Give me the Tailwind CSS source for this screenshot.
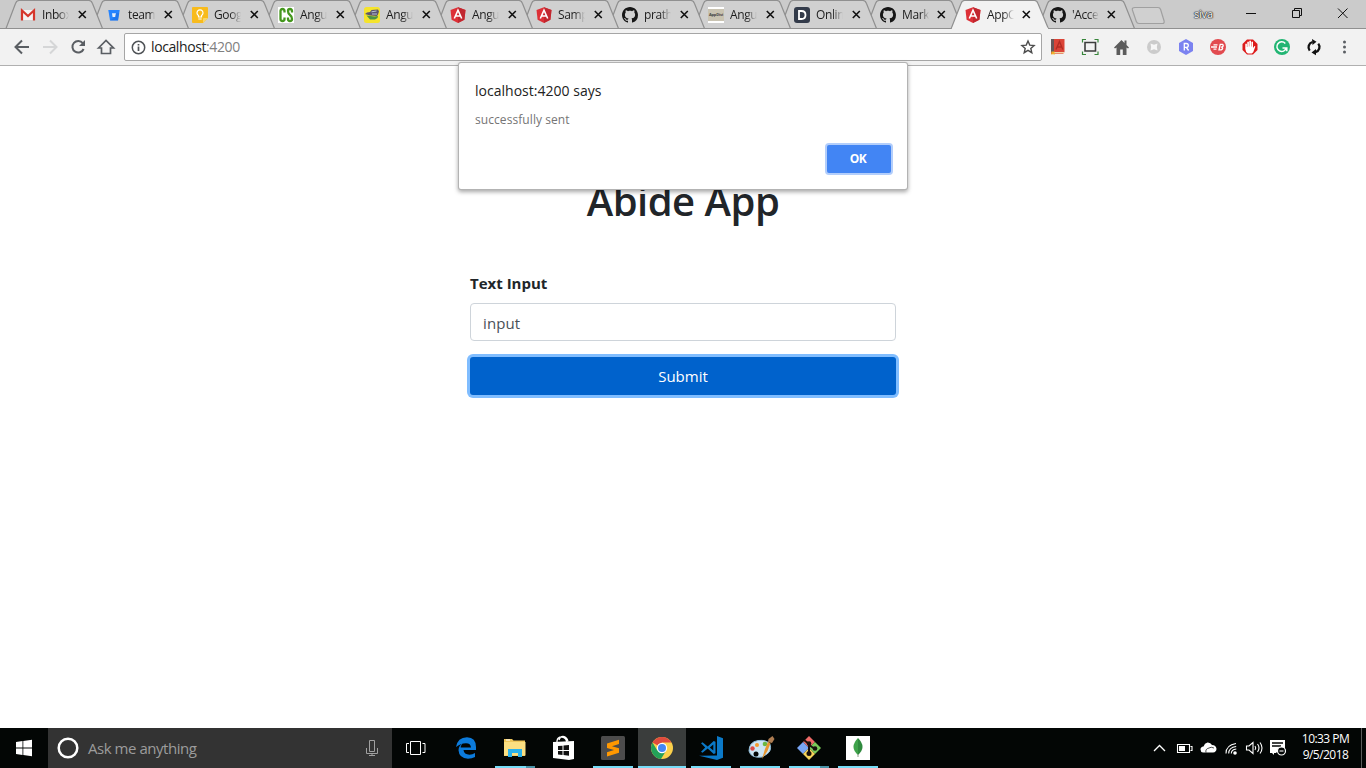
<!DOCTYPE html>
<html lang="en">
<head>
<meta charset="utf-8">
<title>AppComponent</title>
<script src="https://cdn.jsdelivr.net/npm/@tailwindcss/browser@4"></script>
</head>
<body class="w-[1366px] h-[768px] overflow-hidden bg-white font-['Open_Sans','Noto_Sans',sans-serif] text-[#212529]">
<svg class="hidden">
  <defs>
    <path id="tab" d="M6 28.5 L15.5 3.5 Q16.500 .5 19 .5 H89 Q91.500 .5 92.500 3.500 L102.500 28.500" />
    <symbol id="x" viewBox="0 0 9 9"><path d="M.8 1l7 7M7.800 1L.8 8" stroke="#111" stroke-width="1.6" fill="none"/></symbol>
    <symbol id="ng" viewBox="0 0 16 16"><path d="M8 .3L15.500 3l-1.100 9.700L8 16 1.600 12.700.5 3z" fill="#dd3037"/><path d="M8 .3L15.500 3l-1.100 9.700L8 16z" fill="#c1272f"/><path d="M4.300 11.500L8 3.200l3.700 8.300M5.800 9h4.400" stroke="#fff" stroke-width="1.600" fill="none"/></symbol>
    <symbol id="gh" viewBox="0 0 16 16"><path fill="#161616" d="M8 0C3.580 0 0 3.580 0 8c0 3.540 2.290 6.530 5.470 7.590.4.070.55-.17.55-.38 0-.19-.010-.820-.010-1.490-2.010.37-2.530-.49-2.690-.94-.090-.23-.48-.94-.820-1.130-.28-.15-.68-.52-.010-.53.63-.010 1.080.58 1.230.82.72 1.210 1.870.87 2.330.66.070-.52.28-.87.51-1.070-1.780-.2-3.640-.89-3.640-3.950 0-.87.31-1.590.82-2.150-.080-.2-.36-1.020.080-2.120 0 0 .67-.21 2.200.82.64-.18 1.320-.27 2-.27s1.360.090 2 .27c1.530-1.040 2.200-.82 2.200-.82.44 1.100.16 1.920.080 2.120.51.56.82 1.270.82 2.150 0 3.070-1.870 3.750-3.650 3.950.29.25.54.73.54 1.480 0 1.070-.010 1.930-.010 2.200 0 .21.15.46.55.38A8.010 8.010 0 0 0 16 8c0-4.420-3.580-8-8-8z"/></symbol>
  </defs>
</svg>

<div class="relative flex h-screen flex-col">
  <!-- Tab strip -->
  <header class="relative h-[29px] shrink-0 bg-[#cbcbcb]">
    <svg class="absolute inset-0" width="1366" height="29" fill="#d0d0d0" stroke="#909090" stroke-width="1.200">
      <use href="#tab" x="1032"/><use href="#tab" x="860"/><use href="#tab" x="774"/><use href="#tab" x="688"/><use href="#tab" x="602"/><use href="#tab" x="516"/><use href="#tab" x="430"/><use href="#tab" x="344"/><use href="#tab" x="258"/><use href="#tab" x="172"/><use href="#tab" x="86"/><use href="#tab" x="0"/>
      <path d="M0 28.500H1366"/>
      <path d="M1135 7.500h23q2 0 2.600 2l3.500 11.500q.5 2.500-1.600 2.500h-23.500q-2 0-2.700-2l-3.900-11.500q-.8-2.500 2.600-2.500z" stroke="#a0a0a0"/>
      <path d="M951 29 L961 3.500 Q962 .5 964.500 .5 H1034.500 Q1037 .5 1038 3.500 L1048.500 29" fill="#f2f2f2"/>
      <path d="M952 28.500H1048" stroke="#f2f2f2" stroke-width="1.500"/>
    </svg>
    <div class="relative flex h-full">
      <nav class="flex h-full w-[1124px] pl-[20px] text-[12px] leading-[29px] tracking-[-0.4px] text-[#1d1d1d]">
        <div class="flex w-[86px] shrink-0 items-center"><svg class="size-4 shrink-0" viewBox="0 0 16 16"><path d="M2 3h12v10H2z" fill="#f5f2f2"/><path d="M2 13.500V3.500L8 9l6-5.500v10" fill="none" stroke="#d6362b" stroke-width="2.200"/></svg><span class="ml-[6px] w-[27px] whitespace-nowrap [mask-image:linear-gradient(to_right,black_60%,transparent)]">Inbox</span><svg class="ml-[9px] size-[9px]"><use href="#x"/></svg></div>
        <div class="flex w-[86px] shrink-0 items-center"><svg class="size-4 shrink-0" viewBox="0 0 16 16"><path d="M2.300 3h11.400l-1.700 10.500H4z" fill="#2684ff"/><path d="M6 6.300h4l-.6 3.700H6.600z" fill="#e3eefc"/><path d="M10 6.300h3.200L12 13.500H4l5-3.500z" fill="#1769de" opacity=".5"/></svg><span class="ml-[6px] w-[27px] whitespace-nowrap [mask-image:linear-gradient(to_right,black_80%,transparent)]">team</span><svg class="ml-[9px] size-[9px]"><use href="#x"/></svg></div>
        <div class="flex w-[86px] shrink-0 items-center"><svg class="size-4 shrink-0" viewBox="0 0 16 16"><path d="M1 0h14q1 0 1 1v10l-5 5H1q-1 0-1-1V1q0-1 1-1z" fill="#f8bb1d"/><path d="M11 16v-4q0-1 1-1h4z" fill="#f7d66c"/><path d="M6.500 10V8.500a3 3 0 1 1 3 0V10zM6.300 12h3.400" fill="none" stroke="#fff" stroke-width="1.200"/></svg><span class="ml-[6px] w-[27px] whitespace-nowrap [mask-image:linear-gradient(to_right,black_60%,transparent)]">Goog</span><svg class="ml-[9px] size-[9px]"><use href="#x"/></svg></div>
        <div class="flex w-[86px] shrink-0 items-center"><svg class="size-4 shrink-0" viewBox="0 0 16 16"><path d="M0 0h16v16H0z" fill="#fff"/><path d="M6.500 5.500V4q0-2-2-2t-2 2v8q0 2 2 2t2-2v-1.500M14 5.500V4q0-2-2-2t-2 2q0 2.500 2 4t2 4q0 2-2 2t-2-2v-1.500" fill="none" stroke="#45971e" stroke-width="2.300"/></svg><span class="ml-[6px] w-[27px] whitespace-nowrap [mask-image:linear-gradient(to_right,black_60%,transparent)]">Angu</span><svg class="ml-[9px] size-[9px]"><use href="#x"/></svg></div>
        <div class="flex w-[86px] shrink-0 items-center"><svg class="size-4 shrink-0" viewBox="0 0 16 16"><rect width="16" height="16" rx="2.500" fill="#f5e42c"/><path d="M1 7l2-1.500 3-.5 1.500-2L14 2.500l1 2-1 3L13 9 6 8.500z" fill="#5b5570"/><path d="M2.500 8.500l4 .5 4 .5 3.500-.5-.5 2-2.500 1.500H6z" fill="#4d9445"/><path d="M7.500 4.800l5-.8M8 7h5" stroke="#b9c2d6"/></svg><span class="ml-[6px] w-[27px] whitespace-nowrap [mask-image:linear-gradient(to_right,black_60%,transparent)]">Angu</span><svg class="ml-[9px] size-[9px]"><use href="#x"/></svg></div>
        <div class="flex w-[86px] shrink-0 items-center"><svg class="size-4 shrink-0"><use href="#ng"/></svg><span class="ml-[6px] w-[27px] whitespace-nowrap [mask-image:linear-gradient(to_right,black_60%,transparent)]">Angu</span><svg class="ml-[9px] size-[9px]"><use href="#x"/></svg></div>
        <div class="flex w-[86px] shrink-0 items-center"><svg class="size-4 shrink-0"><use href="#ng"/></svg><span class="ml-[6px] w-[27px] whitespace-nowrap [mask-image:linear-gradient(to_right,black_60%,transparent)]">Samp</span><svg class="ml-[9px] size-[9px]"><use href="#x"/></svg></div>
        <div class="flex w-[86px] shrink-0 items-center"><svg class="size-4 shrink-0"><use href="#gh"/></svg><span class="ml-[6px] w-[27px] whitespace-nowrap [mask-image:linear-gradient(to_right,black_60%,transparent)]">prath</span><svg class="ml-[9px] size-[9px]"><use href="#x"/></svg></div>
        <div class="flex w-[86px] shrink-0 items-center"><span class="flex size-4 shrink-0 items-center justify-center border-y-2 border-white bg-[#c9c3b1] text-[4px] font-bold leading-none tracking-[-0.2px] text-[#444]">AppDivi</span><span class="ml-[6px] w-[27px] whitespace-nowrap [mask-image:linear-gradient(to_right,black_60%,transparent)]">Angu</span><svg class="ml-[9px] size-[9px]"><use href="#x"/></svg></div>
        <div class="flex w-[86px] shrink-0 items-center"><svg class="size-4 shrink-0" viewBox="0 0 16 16"><rect width="16" height="16" rx="3" fill="#333b4a"/><path d="M5 4h2.500q4 0 4 4t-4 4H5z" fill="none" stroke="#fff" stroke-width="1.800"/></svg><span class="ml-[6px] w-[27px] whitespace-nowrap [mask-image:linear-gradient(to_right,black_60%,transparent)]">Onlin</span><svg class="ml-[9px] size-[9px]"><use href="#x"/></svg></div>
        <div class="flex w-[85px] shrink-0 items-center"><svg class="size-4 shrink-0"><use href="#gh"/></svg><span class="ml-[6px] w-[27px] whitespace-nowrap [mask-image:linear-gradient(to_right,black_70%,transparent)]">Mark</span><svg class="ml-[8px] size-[9px]"><use href="#x"/></svg></div>
        <div class="flex w-[85px] shrink-0 items-center"><svg class="size-4 shrink-0"><use href="#ng"/></svg><span class="ml-[6px] w-[27px] whitespace-nowrap [mask-image:linear-gradient(to_right,black_60%,transparent)]">AppC</span><svg class="ml-[8px] size-[9px]"><use href="#x"/></svg></div>
        <div class="flex w-[86px] shrink-0 items-center"><svg class="size-4 shrink-0"><use href="#gh"/></svg><span class="ml-[6px] w-[27px] whitespace-nowrap [mask-image:linear-gradient(to_right,black_60%,transparent)]">'Acce</span><svg class="ml-[8px] size-[9px]"><use href="#x"/></svg></div>
      </nav>
      <div class="flex pl-[70px]">
        <span class="w-[50px] text-[11px] leading-[28px] tracking-[-0.2px] text-white [text-shadow:0_0_1px_#222,0_0_1px_#222,0_0_1px_#222,0_0_2px_#444]">siva</span>
        <svg width="112" height="29" fill="none" stroke="#111" stroke-width="1"><path d="M2 13.500h10M48.500 10.500h7v7h-7zM50.500 10.500v-2h7v7h-2"/><path d="M94 8.500l9.500 9.500M103.500 8.500L94 18"/></svg>
      </div>
    </div>
  </header>

  <!-- Toolbar -->
  <div class="flex h-[37px] shrink-0 items-center border-b border-[#b0b0b0] bg-[#f2f2f2] pl-[12px]">
    <svg class="shrink-0" width="112" height="36" fill="none" stroke="#5a5e63" stroke-width="2">
      <path d="M17 18H4M10 11.500L3.500 18l6.500 6.500"/>
      <path d="M31 18h13M38 11.500l6.500 6.500-6.500 6.500" stroke="#d5d6d7"/>
      <path d="M70.800 14.200A5.800 5.800 0 1 0 71.600 20"/><path d="M73 11v6h-6z" fill="#5a5e63" stroke="none"/>
      <path d="M86.500 19L94 11.500l7.500 7.500h-3v5.500h-9V19z" stroke-width="1.700"/>
    </svg>
    <div class="flex h-[28px] w-[918px] shrink-0 items-center rounded-[2px] border border-[#a6a6a6] bg-white pl-[6px]">
      <svg class="shrink-0" width="15" height="15" fill="none" stroke="#4f5357" stroke-width="1.500"><circle cx="7.500" cy="7.500" r="6.200"/><path d="M7.500 6.500V11M7.500 4v1.600" stroke-width="1.700"/></svg>
      <span class="ml-[5px] grow pb-px text-[14px] tracking-[-0.4px] text-[#222]">localhost<span class="text-[#808080]">:4200</span></span>
      <svg class="mr-[5px]" width="16" height="16" fill="none" stroke="#4d4d4d" stroke-width="1.400"><path d="M8 2l1.750 4.100 4.350.4-3.300 2.900 1 4.300L8 11.400l-3.800 2.300 1-4.300L1.900 6.500l4.350-.4z"/></svg>
    </div>
    <svg class="shrink-0" width="320" height="36">
      <path d="M9 10h13.500v13L21 25H9z" fill="#db4437"/><path d="M9 10h3v13H9z" fill="#66585a"/><path d="M11 23h11v1.500H9.500z" fill="#f1d6a8"/><path d="M9.500 22.500h3V26l-1.500-1-1.500 1z" fill="#efb429"/><path d="M14 20.500l3.500-8 3.300 8M15 18h5" stroke="#b22c24" stroke-width="1.300" fill="none"/>
      <path d="M43 13.500h10.500v8.500H43z" fill="none" stroke="#3c3c3c" stroke-width="1.600"/><path d="M40.500 13.500v-3H44M52.500 10.500H56v3M56 22.500v3h-3.500M44 25.500h-3.500v-3" fill="none" stroke="#37863b" stroke-width="1.200"/>
      <path d="M72 18.500L79.500 11l3 3v-2.500h2V16l2.500 2.500-1 1-1.500-1V26h-3.700v-5.500h-2.600V26h-3.700v-7.500l-1.500 1z" fill="#5c5c5c"/>
      <circle cx="112" cy="18" r="7" fill="#cbcbcb"/><path d="M108.500 14.500l3.500 1.300 3.500-1.300q-1.300 3.500 0 7l-3.500-1.300-3.500 1.300q1.300-3.500 0-7z" fill="#f6f6f6"/>
      <path d="M144 10l7 4v8l-7 4-7-4v-8z" fill="#7b82f0"/><path d="M142.300 21.500v-7h2q2 0 2 1.900t-2 1.900h-2m2 0l2.300 3.200" fill="none" stroke="#fff" stroke-width="1.300"/>
      <circle cx="176" cy="18" r="8" fill="#e24b50"/><path d="M169 18h6M171.500 15.800h4M171.500 20.200h3M177 20.800l1.200-5.400h2.300q1.800 1.300-.7 2.700q2 1.400-.7 2.700z" fill="none" stroke="#fff" stroke-width="1.300"/>
      <path d="M205 10.500h6l4.500 4.500v6l-4.500 4.500h-6l-4.500-4.500v-6z" fill="#dd1b1b"/><path d="M203.300 20v-5q.8-.8 1.600 0v3h.4v-5q.8-.8 1.600 0v4.500h.4V12q.8-.8 1.700 0v5.500h.4V13q.8-.8 1.600 0v6l1.200-1.800q1.300-.4 1 .8l-2 5.200-1.400 1.300h-4q-2.200-1.500-2.500-4.500z" fill="#fff"/>
      <circle cx="240" cy="18" r="8" fill="#22b573"/><path d="M243.300 14.500a4.800 4.800 0 1 0 1 4.500H240.500M244.800 18.300v4" fill="none" stroke="#fff" stroke-width="1.500"/>
      <path d="M270.500 13a5.400 5.400 0 0 0-2.800 8.600M273.500 23.200a5.400 5.400 0 0 0 2.800-8.600" fill="none" stroke="#111" stroke-width="2.300"/><path d="M270 10l4.500 2.700-4 3.300zM274 20v6.200l-4.500-2.700z" fill="#111"/>
      <g fill="#5a5e63"><circle cx="302.500" cy="13" r="1.500"/><circle cx="302.500" cy="18" r="1.500"/><circle cx="302.500" cy="23" r="1.500"/></g>
    </svg>
  </div>

  <!-- Page -->
  <main class="flex grow flex-col items-center pt-[111px]">
    <h1 class="h-[48px] text-[40px] font-semibold leading-[48px] tracking-[-0.5px]">Abide App</h1>
    <form class="mt-[46px] flex w-[426px] flex-col">
      <label class="text-[15px] font-bold leading-[24px]">Text Input</label>
      <div class="mt-[8px] flex h-[38px] items-center rounded-[4px] border border-[#ced4da] px-3 pt-[2px] text-[15px] tracking-[0.1px] text-[#495057]">input</div>
      <button type="button" class="mt-4 h-[38px] rounded-[3px] bg-[#0062cc] text-[15px] text-white shadow-[0_0_0_3px_#80bdff]">Submit</button>
    </form>
  </main>

  <!-- Alert dialog -->
  <div class="absolute left-[459px] top-[63px] flex h-[126px] w-[448px] flex-col rounded-[2px] bg-white pl-4 pt-[16px] shadow-[0_0_0_1px_#b3b3b3,0_2px_4px_1px_rgba(0,0,0,0.35)]">
    <p class="text-[14px] leading-[24px] tracking-[0.02px] text-[#222]">localhost:4200 says</p>
    <p class="mt-[7px] text-[12px] leading-[20px] tracking-[0.07px] text-[#757575]">successfully sent</p>
    <button type="button" class="ml-[352px] mt-[15px] h-[28px] w-[64px] rounded-[2px] bg-[#4285f4] pr-[2px] text-[12px] font-bold tracking-[-0.4px] text-white shadow-[0_0_0_2px_#b3cefb]">OK</button>
  </div>

  <!-- Taskbar -->
  <footer class="flex h-[40px] shrink-0 bg-[#030605]">
    <svg class="shrink-0" width="48" height="40" fill="#fff"><path d="M16 14l6.500-1v6.500H16zM23.300 12.900L32 11.700v7.800h-8.700zM16 20.400h6.500V27L16 26zM23.300 20.400H32v7.900l-8.700-1.200z"/></svg>
    <div class="flex w-[344px] shrink-0 items-center bg-[#333]">
      <svg class="ml-2 shrink-0" width="24" height="24" fill="none" stroke="#fff" stroke-width="2.500"><circle cx="12" cy="12" r="9.300"/></svg>
      <span class="ml-2 grow text-[15px] tracking-[-0.46px] text-[#9c9c9c]">Ask me anything</span>
      <svg class="mr-[14px]" width="12" height="18" fill="none" stroke="#a0a0a0"><path d="M3.500 1.500h5v11h-5zM.5 9v5.500h11V9M6 14.500V17M3 16.500h6"/></svg>
    </div>
    <svg class="shrink-0" width="500" height="40">
      <path d="M246 0h48v40h-48z" fill="#3a3d3c"/>
      <g fill="#76dcf7"><path d="M103 38h31v2h-31zM201 38h40v2h-40zM246 38h48v2h-48zM299 38h40v2h-40zM348 38h40v2h-40zM397 38h31v2h-31zM446 38h40v2h-40z"/></g><path d="M134 38h9v2h-9zM428 38h9v2h-9z" fill="#4a93a8"/>
      <path d="M18.500 13.500h10v13h-10zM17 15.500h-2.500v9H17M30.500 15.500H33v9h-2.500" fill="none" stroke="#fff" stroke-width="1"/>
      <path d="M64 19q1.500-9.500 11-9.800Q84 9.500 84 19v3H71.500q.5 4.500 6 4.700 3 0 5.500-1.700v4q-3 1.700-7 1.700-9-.5-9.500-8.500.2-4.500 4-6.700-1.700 2-1.800 4H79q-.3-4.200-5-4.300-5.500.2-10 3.800z" fill="#0c7bdc"/>
      <path d="M112 11h8l1.500 1.500H133v15.500h-21z" fill="#efc65a"/><path d="M112 14h21.500v13.500H112z" fill="#fbdf82"/><path d="M116 29v-8h14v8h-4v-4h-6v4z" fill="#2bb2ec"/><path d="M114 12h4" stroke="#fff"/>
      <path d="M161 14l21-1v18l-5 1-16-2z" fill="#fff"/><path d="M165 14v-1q.5-4 4.500-4t5 4v1M167 12q1-3.500 4-3.500 4 .5 5 5" fill="none" stroke="#fff" stroke-width="1.300"/><path d="M166 18l4.500-.3v4.300H166zM171.500 17.500l5.500-.4V22h-5.500zM166 23h4.500v4l-4.500-.4zM171.500 23h5.500v4.800l-5.500-.7z" fill="#111"/>
      <rect x="209" y="8" width="24" height="24" rx="1.500" fill="#4c4c4c"/><path d="M215 15.500l12-3.700v4.200l-7 2.200 7 2.100v4.400L215 28.500v-4.200l7-2.200-7-2.200z" fill="#ff9800"/>
      <circle cx="270" cy="20" r="11" fill="#fbd04b"/><path d="M270 20L260.500 14.500A11 11 0 0 1 279.500 14.500H270z" fill="#df4b3e"/><path d="M260.500 14.500A11 11 0 0 0 269 31l5.500-9-4.500 3-5-3z" fill="#23a159"/><circle cx="270" cy="20" r="5.200" fill="#fff"/><circle cx="270" cy="20" r="4" fill="#4486f4"/>
      <path d="M325 8l6 2.200v19.600L325 32l-18-4.200 18-.3z" fill="#0b79c8"/><path d="M309 15.300l1.500-1 5.200 4.100 6-5.400 1.800.8v11.400l-1.800.8-6-5.400-5.200 4.100-1.500-1 4.200-4.200zM317.800 19.500l3.500 3v-6z" fill="#0b79c8" fill-rule="evenodd"/>
      <path d="M357 23q0-9 9-10.500 9-1 12 4 2 6-3 9.500l-5 3q-11 1.500-13-6z" fill="#cde5f4" stroke="#8fbcd8"/><circle cx="360.500" cy="20.500" r="2.200" fill="#db4b48"/><circle cx="365" cy="17" r="2" fill="#f49a2d"/><circle cx="373" cy="16" r="2.300" fill="#6bb841"/><circle cx="364" cy="26" r="2.500" fill="#030605"/><path d="M370 31l3-10 3-7 2.500 1-3 8z" fill="#e8952e"/><path d="M376 14l.5-3 4-3 2 3-2.500 4z" fill="#ae7d52"/>
      <path d="M417 8l6 6-6 6-6-6z" fill="#ef6a68"/><path d="M423 14l6 6-6 6-6-6z" fill="#79cb59"/><path d="M411 14l6 6-6 6-6-6z" fill="#78a5f5"/><path d="M417 20l6 6-6 6-6-6z" fill="#f5d35b"/><path d="M412 12l5 4v10M417 17l6 4" fill="none" stroke="#17100e" stroke-width="2"/><g fill="#17100e"><circle cx="417" cy="15.500" r="2.300"/><circle cx="417" cy="25.500" r="2.500"/><circle cx="423" cy="20.500" r="2.300"/></g>
      <path d="M454 8h24v24h-24z" fill="#fff"/><path d="M466 10q-9 9 0 17z" fill="#3fa34b"/><path d="M466 10q9 9 0 17z" fill="#2f8a3e"/><path d="M466 26v3" stroke="#8a9a88"/>
    </svg>
    <div class="flex grow justify-end">
      <svg width="142" height="40" fill="none" stroke="#fff" stroke-width="1.300">
        <path d="M5 23l5.500-5.500L16 23"/>
        <path d="M28.500 16.500h12v8h-12zM41.500 18.500H43v4h-1.500" stroke-width="1.100"/><path d="M30 18h6v5h-6z" fill="#fff" stroke="none"/>
        <path d="M54 24.500q-2.500-.5-2.500-3.100 0-2.700 3-3 1-3.200 4-3.900 3-.2 4.500 2.500 4 .2 4.500 3.700 0 3.300-3.500 3.800z" fill="#fff" stroke="none"/><path d="M57 24.500q-1-3.500 3-4.500 2-1.500 5 0" stroke="#030605" stroke-width=".7"/>
        <path d="M77 25.500q0-8.500 10-10M79.700 25.500q0-6 7.500-7M82.300 25.500q0-4 5-4.500" stroke-width="1.100"/><circle cx="86" cy="25" r="1.800" fill="#fff" stroke="none"/>
        <path d="M97.500 18h2.500l4-3.500v11L100 22h-2.500zM106 18q1.500 2 0 4M108.500 16q3 4 0 8M111 14.500q4 5.500 0 11" stroke-width="1.100"/>
        <path d="M121 12h15v8.500h-5l-4 4.500h-2v2l-2-2h-2z" fill="#fff" stroke="none"/><path d="M123 15h11M123 18h9" stroke="#030605"/><circle cx="132.500" cy="23" r="4" fill="#030605" stroke-width="1.200"/><path d="M130.500 23h4" stroke-width="1.100"/>
      </svg>
      <div class="ml-[8px] w-[53px] whitespace-nowrap pt-[3px] text-center text-[12px] leading-[16px] tracking-[-0.55px] text-white">10:33 PM<br>9/5/2018</div>
      <div class="ml-[9px] mr-[4px] h-full w-px bg-[#5a5c5b]"></div>
    </div>
  </footer>
</div>
</body>
</html>
